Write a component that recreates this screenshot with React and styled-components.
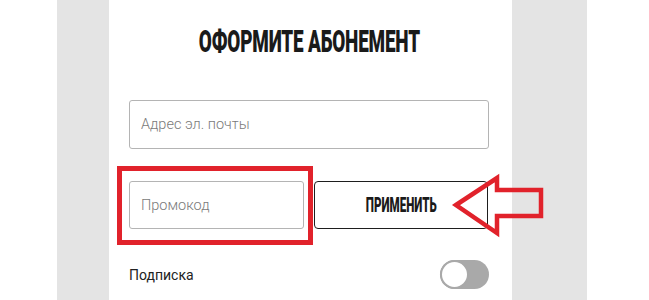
import styled, { createGlobalStyle } from "styled-components";

const GlobalStyle = createGlobalStyle`
  html, body {
    margin: 0;
    padding: 0;
    background: #ffffff;
    font-family: Roboto, "Liberation Sans", sans-serif;
  }
`;

const Page = styled.div`
  width: 649px;
  height: 300px;
  overflow: hidden;
  background: #ffffff;
`;

const Stage = styled.div`
  margin-left: 57px;
  width: 530px;
  height: 300px;
  box-sizing: border-box;
  padding: 0 75px 0 52px;
  background: #e4e4e4;
`;

const Card = styled.div`
  position: relative;
  height: 300px;
  box-sizing: border-box;
  padding: 0 23px 0 20px;
  background: #ffffff;
  display: flex;
  flex-direction: column;
`;

const Title = styled.h1`
  margin: 0;
  height: 100px;
  display: flex;
  justify-content: center;
  align-items: flex-start;
`;

const Condensed = styled.span`
  display: inline-block;
  font-family: Roboto, "Liberation Sans", sans-serif;
  font-weight: 900;
  color: #1a1a1a;
  white-space: nowrap;
  line-height: 1;
  transform: scaleX(${(p) => p.$scale});
  font-size: ${(p) => p.$size}px;
`;

const TitleText = styled(Condensed)`
  margin-top: 25px;
  letter-spacing: -0.3px;
`;

const Field = styled.input`
  display: block;
  box-sizing: border-box;
  width: 100%;
  height: 49px;
  margin: 0;
  padding: 0 11px;
  border: 1px solid #b4b4b4;
  border-radius: 3px;
  background: #ffffff;
  font-family: Roboto, "Liberation Sans", sans-serif;
  font-weight: 300;
  font-size: 14.5px;
  color: #333;
  outline: none;

  &::placeholder {
    color: #7a7a7a;
  }
`;

const PromoRow = styled.div`
  margin-top: 32px;
  display: grid;
  grid-template-columns: 175px 174px;
  column-gap: 10px;
`;

const ApplyButton = styled.button`
  height: 48px;
  margin: 0;
  padding: 0;
  border: 1px solid #1e1e1e;
  border-radius: 4px;
  background: #ffffff;
  display: flex;
  align-items: center;
  justify-content: center;
  cursor: pointer;
`;

const SubscribeRow = styled.div`
  margin-top: 31px;
  width: 360px;
  height: 29px;
  display: flex;
  align-items: center;
  justify-content: space-between;
`;

const Label = styled.span`
  font-family: Roboto, "Liberation Sans", sans-serif;
  font-size: 14px;
  color: #222;
`;

const Track = styled.span`
  position: relative;
  display: block;
  width: 49px;
  height: 29px;
  border-radius: 15px;
  background: #a9a9a9;
`;

const Knob = styled.span`
  position: absolute;
  left: 0;
  top: 0;
  box-sizing: border-box;
  width: 29px;
  height: 29px;
  border-radius: 50%;
  border: 2px solid #a9a9a9;
  background: #ffffff;
`;

const Highlight = styled.div`
  position: absolute;
  left: 8px;
  top: 166px;
  width: 196px;
  height: 79px;
  box-sizing: border-box;
  border: 5px solid #e1222b;
  pointer-events: none;
`;

const ArrowMark = styled.svg`
  position: absolute;
  left: 331px;
  top: 165px;
  width: 115px;
  height: 80px;
  overflow: visible;
  pointer-events: none;
`;

export default function App() {
  return (
    <Page>
      <GlobalStyle />
      <Stage>
        <Card>
          <Title>
            <TitleText $size={32} $scale={0.59}>
              ОФОРМИТЕ АБОНЕМЕНТ
            </TitleText>
          </Title>
          <Field type="email" placeholder="Адрес эл. почты" />
          <PromoRow>
            <Field type="text" placeholder="Промокод" style={{ height: 48 }} />
            <ApplyButton type="button">
              <Condensed $size={20} $scale={0.58}>
                ПРИМЕНИТЬ
              </Condensed>
            </ApplyButton>
          </PromoRow>
          <SubscribeRow>
            <Label>Подписка</Label>
            <Track>
              <Knob />
            </Track>
          </SubscribeRow>
          <Highlight />
          <ArrowMark viewBox="0 0 115 80">
            <polygon
              points="16,40 57,13 57,25 101,25 101,51 57,51 57,68"
              fill="none"
              stroke="#e1222b"
              strokeWidth="4.5"
              strokeLinejoin="miter"
            />
          </ArrowMark>
        </Card>
      </Stage>
    </Page>
  );
}
